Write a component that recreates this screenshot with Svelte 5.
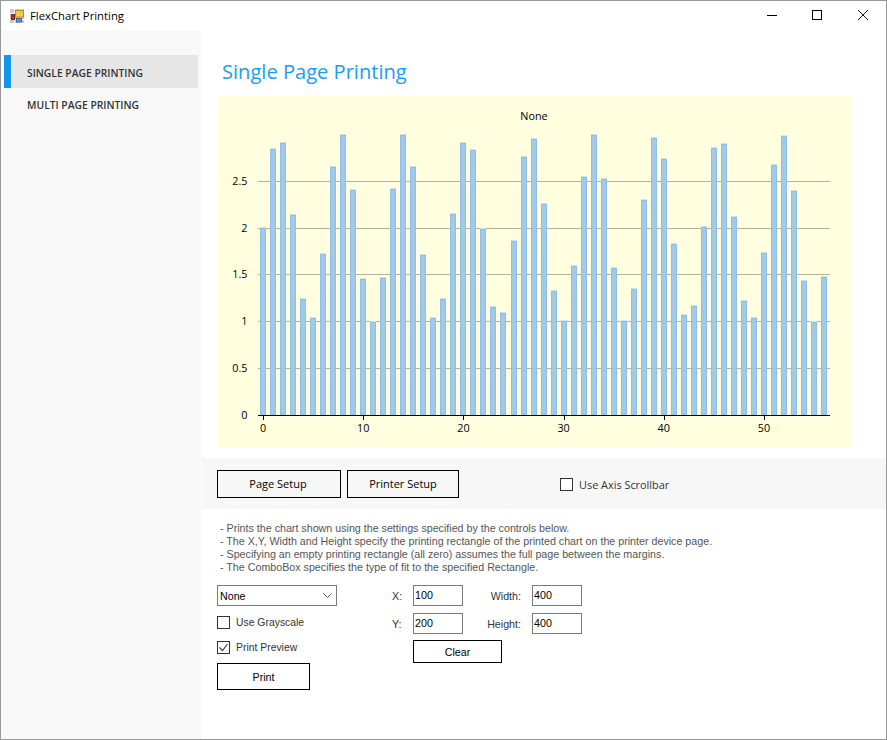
<script>
  const values = [
    2.01, 2.85, 2.92, 2.15, 1.25, 1.05, 1.73, 2.66, 3.0, 2.41,
    1.46, 1.0, 1.47, 2.43, 3.0, 2.66, 1.72, 1.05, 1.25, 2.16,
    2.92, 2.84, 2.0, 1.16, 1.1, 1.87, 2.77, 2.96, 2.27, 1.34,
    1.02, 1.6, 2.55, 3.0, 2.53, 1.58, 1.01, 1.36, 2.31, 2.97,
    2.75, 1.84, 1.08, 1.17, 2.02, 2.86, 2.91, 2.13, 1.23, 1.05,
    1.74, 2.68, 2.99, 2.4, 1.44, 1.0, 1.48
  ];

  const baseY = 319;
  const unitY = 93.6;
  const x0 = 45;
  const stepX = 10.02;

  // pixel rows of the value axis labels / gridlines
  const yTicks = [
    { label: '0', row: 319 },
    { label: '0.5', row: 272 },
    { label: '1', row: 225 },
    { label: '1.5', row: 178 },
    { label: '2', row: 132 },
    { label: '2.5', row: 85 }
  ];
  const xTicks = [0, 10, 20, 30, 40, 50];

  const bars = values.map((v, i) => {
    const top = Math.round(baseY - v * unitY);
    return { x: Math.round(x0 + i * stepX) - 2.5, top };
  });

  const help = [
    '- Prints the chart shown using the settings specified by the controls below.',
    '- The X,Y, Width and Height specify the printing rectangle of the printed chart on the printer device page.',
    '- Specifying an empty printing rectangle (all zero) assumes the full page between the margins.',
    '- The ComboBox specifies the type of fit to the specified Rectangle.'
  ];
</script>

<div class="window">
  <header class="titlebar">
    <svg class="app-icon" viewBox="0 0 14 14" width="14" height="14">
      <rect width="14" height="14" fill="#c9c9c9" />
      <path d="M0 4.5H14M0 10.5H14M4.5 0V14M10.5 0V14" stroke="#fff" />
      <rect x="5.5" y="1.5" width="8" height="6.5" fill="#f7c948" stroke="#b98a1e" />
      <rect x="1.5" y="5.5" width="3" height="5" fill="#c0352b" stroke="#7d1f1a" />
      <rect x="6.5" y="9.5" width="5" height="3.5" fill="#6b94d6" stroke="#3f66a8" />
    </svg>
    <span class="app-title">FlexChart Printing</span>
    <div class="win-controls">
      <svg viewBox="0 0 10 10" width="10" height="10"><path d="M0 5.5H10" stroke="#000" fill="none" /></svg>
      <svg viewBox="0 0 10 10" width="10" height="10"><rect x="0.5" y="0.5" width="9" height="9" stroke="#000" fill="none" /></svg>
      <svg class="close" viewBox="0 0 10 10" width="10" height="10"><path d="M0 0L10 10M10 0L0 10" stroke="#000" stroke-width="0.9" fill="none" /></svg>
    </div>
  </header>

  <div class="body">
    <nav class="sidebar">
      <div class="nav-item active">SINGLE PAGE PRINTING</div>
      <div class="nav-item">MULTI PAGE PRINTING</div>
    </nav>

    <main class="content">
      <h1>Single Page Printing</h1>

      <div class="chart">
        <svg viewBox="0 0 633 352" width="633" height="352">
          <text class="chart-text" x="316" y="24" text-anchor="middle">None</text>
          {#each yTicks as tick, i}
            {#if i > 0}
              <line x1="40" x2="612" y1={tick.row + 0.5} y2={tick.row + 0.5} stroke="#b2b2a0" />
            {/if}
            <text class="chart-text" x="29.5" y={tick.row + 4} text-anchor="end">{tick.label}</text>
          {/each}
          {#each bars as bar}
            <line class="bar-cap" x1={bar.x - 0.5} x2={bar.x + 5.5} y1={bar.top + 0.5} y2={bar.top + 0.5} />
            <rect class="bar" x={bar.x} y={bar.top + 1.5} width="5" height={baseY - bar.top - 1.5} />
          {/each}
          <line x1="40" x2="612" y1={baseY + 0.5} y2={baseY + 0.5} stroke="#000" />
          {#each xTicks as tick}
            <line x1={Math.round(x0 + tick * stepX) + 0.5} x2={Math.round(x0 + tick * stepX) + 0.5} y1={baseY} y2={baseY + 5} stroke="#000" />
            <text class="chart-text" x={x0 + tick * stepX} y={baseY + 17} text-anchor="middle">{tick}</text>
          {/each}
        </svg>
      </div>

      <div class="toolbar">
        <button class="btn page-setup">Page Setup</button>
        <button class="btn printer-setup">Printer Setup</button>
        <label class="check scrollbar-check"><span class="box"></span>Use Axis Scrollbar</label>
      </div>

      <div class="help">
        {#each help as line}
          <div>{line}</div>
        {/each}
      </div>

      <div class="controls">
        <div class="left-col">
          <div class="combo">
            <span>None</span>
            <svg viewBox="0 0 9 5" width="9" height="5"><path d="M0.5 0.5L4.5 4.5L8.5 0.5" stroke="#555" fill="none" /></svg>
          </div>
          <label class="check"><span class="box"></span>Use Grayscale</label>
          <label class="check preview">
            <span class="box">
              <svg viewBox="0 0 11 11" width="11" height="11"><path d="M1.5 5.5L4.5 8.5L9.5 2" stroke="#444" stroke-width="1.2" fill="none" /></svg>
            </span>Print Preview
          </label>
          <button class="btn print">Print</button>
        </div>
        <div class="rect-col">
          <div class="field-grid">
            <span class="lbl">X:</span><div class="input">100</div>
            <span class="lbl w-lbl">Width:</span><div class="input">400</div>
            <span class="lbl">Y:</span><div class="input">200</div>
            <span class="lbl w-lbl">Height:</span><div class="input">400</div>
          </div>
          <button class="btn clear">Clear</button>
        </div>
      </div>
    </main>
  </div>
</div>

<style>
  :global(body) {
    margin: 0;
    background: #fff;
  }

  .window {
    box-sizing: border-box;
    width: 887px;
    height: 740px;
    border: 1px solid #999;
    background: #fff;
    display: flex;
    flex-direction: column;
    overflow: hidden;
    font-family: "Liberation Sans", sans-serif;
  }

  .titlebar {
    height: 30px;
    flex: none;
    display: flex;
    align-items: center;
    padding-left: 9px;
    gap: 6px;
  }

  .app-icon {
    margin-bottom: 1px;
  }

  .app-title {
    font-family: "Open Sans", sans-serif;
    font-size: 11.3px;
    color: #000;
    margin-bottom: 2px;
  }

  .win-controls {
    margin-left: auto;
    margin-right: 18px;
    margin-bottom: 2px;
    display: flex;
    gap: 35px;
  }

  .win-controls .close {
    margin-left: 1px;
  }

  .body {
    flex: 1;
    display: flex;
    min-height: 0;
  }

  .sidebar {
    width: 200px;
    flex: none;
    box-sizing: border-box;
    background: #f8f8f8;
    padding: 24px 3px 0;
  }

  .nav-item {
    height: 33px;
    display: flex;
    align-items: center;
    padding-left: 23px;
    font-family: "Open Sans", sans-serif;
    font-size: 10.3px;
    font-weight: 600;
    color: #333;
    box-sizing: border-box;
  }

  .nav-item.active {
    background: #e6e6e6;
    border-left: 7px solid #1297ef;
    padding-left: 16px;
    padding-top: 2px;
  }

  .content {
    flex: 1;
    min-width: 0;
  }

  h1 {
    margin: 26px 0 0 21px;
    height: 39px;
    font-family: "Open Sans", sans-serif;
    font-size: 20.1px;
    font-weight: 400;
    line-height: 30px;
    color: #1e9bf0;
  }

  .chart {
    margin-left: 17px;
    width: 633px;
    height: 352px;
    background: #ffffe0;
  }

  .chart svg {
    display: block;
  }

  .chart-text {
    font-family: "Open Sans", sans-serif;
    font-size: 10.8px;
    fill: #000;
  }

  .bar {
    fill: #a2cae8;
    stroke: #8ebee6;
    stroke-width: 1;
  }

  .bar-cap {
    stroke: #cfe5ea;
    stroke-width: 1;
  }

  .toolbar {
    margin-top: 10px;
    margin-left: 1px;
    height: 51px;
    background: #f7f7f7;
    display: flex;
    align-items: center;
    padding-left: 15px;
    box-sizing: border-box;
  }

  .btn {
    box-sizing: border-box;
    background: transparent;
    border: 1px solid #000;
    border-radius: 0;
    padding: 0;
    color: #000;
    font-family: "Open Sans", sans-serif;
    font-size: 11px;
  }

  .page-setup {
    width: 124px;
    height: 28px;
    margin-right: 6px;
    padding-right: 2px;
  }

  .printer-setup {
    width: 112px;
    height: 28px;
    margin-right: 101px;
  }

  .check {
    display: flex;
    align-items: center;
    gap: 6px;
    font-size: 10.4px;
    color: #333;
  }

  .scrollbar-check {
    font-family: "Open Sans", sans-serif;
    font-size: 10.9px;
    margin-top: 2px;
  }

  .box {
    box-sizing: border-box;
    width: 13px;
    height: 13px;
    border: 1px solid #333;
    display: inline-flex;
    background: #fff;
  }

  .help {
    margin: 13px 0 0 19px;
    font-size: 10.7px;
    line-height: 13px;
    color: #555;
  }

  .controls {
    margin: 11px 0 0 16px;
    display: flex;
  }

  .left-col {
    width: 120px;
    display: flex;
    flex-direction: column;
  }

  .combo {
    box-sizing: border-box;
    width: 120px;
    height: 21px;
    border: 1px solid #7a7a7a;
    display: flex;
    align-items: center;
    justify-content: space-between;
    padding: 0 4px 0 2px;
    font-size: 10.7px;
    color: #000;
    margin-bottom: 10px;
  }

  .left-col .check {
    height: 13px;
    margin-bottom: 12px;
  }

  .left-col .preview {
    margin-bottom: 9px;
  }

  .print {
    width: 93px;
    height: 27px;
    font-family: "Liberation Sans", sans-serif;
    font-size: 10.7px;
  }

  .rect-col {
    margin-left: 55px;
  }

  .field-grid {
    display: grid;
    grid-template-columns: 21px 50px 69px 50px;
    grid-auto-rows: 21px;
    row-gap: 7px;
    align-items: center;
    margin-bottom: 6px;
  }

  .lbl {
    font-size: 10.7px;
    color: #333;
  }

  .w-lbl {
    text-align: right;
    padding-right: 11px;
  }

  .input {
    box-sizing: border-box;
    height: 21px;
    border: 1px solid #7a7a7a;
    font-size: 10.7px;
    line-height: 19px;
    padding-left: 1px;
    color: #000;
  }

  .clear {
    width: 89px;
    height: 23px;
    margin-left: 21px;
    font-family: "Liberation Sans", sans-serif;
    font-size: 10.7px;
  }
</style>
